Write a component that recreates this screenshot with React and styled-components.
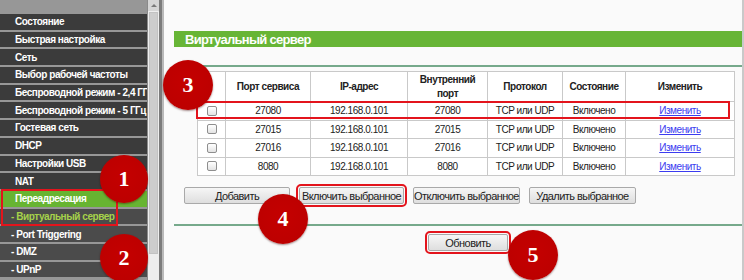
import React from "react";
import styled, { createGlobalStyle, css } from "styled-components";

const GlobalStyle = createGlobalStyle`
  html, body { margin: 0; padding: 0; background: #fafafa; }
  body { width: 744px; height: 280px; overflow: hidden; font-family: "Liberation Sans", Arial, sans-serif; }
`;

const Page = styled.div`
  position: relative;
  display: flex;
  width: 744px;
  height: 280px;
  overflow: hidden;
`;

const Sidebar = styled.nav`
  width: 147px;
  flex: none;
  background: #979797;
  padding-top: 14px;
  display: flex;
  flex-direction: column;
  gap: 2px;
`;

const MenuItem = styled.div`
  height: 15.7px;
  flex: none;
  display: flex;
  align-items: center;
  white-space: nowrap;
  overflow: hidden;
  padding-left: ${(p) => (p.$sub ? "11px" : "15px")};
  background: ${(p) => (p.$active ? "#67b431" : p.$sub ? "#4b4b4b" : "#3b3b3b")};
  color: ${(p) => (p.$current ? "#a6d24a" : "#ffffff")};
  font-size: 10px;
  font-weight: bold;
  letter-spacing: -0.45px;
`;

const Scrollbar = styled.div`
  width: 11px;
  flex: none;
  background: #eeeeee;
  border-left: 1px solid #8a8a8a;
  display: flex;
  flex-direction: column;
`;

const ScrollArrow = styled.div`
  height: 11px;
  display: flex;
  align-items: center;
  justify-content: center;
  background: #d6d6d6;
  &::before {
    content: "";
    border-left: 3px solid transparent;
    border-right: 3px solid transparent;
    border-bottom: 3px solid #7a7a7a;
  }
`;

const ScrollThumb = styled.div`
  height: 240px;
  margin: 1px 1px 0;
  background: #cdcdcd;
  border: 1px solid #c2c2c2;
`;

const FrameEdge = styled.div`
  width: 5px;
  flex: none;
  background: #b9b9b9;
  border-left: 3px solid #7c7c7c;
  box-sizing: border-box;
`;

const Content = styled.main`
  flex: 1;
  padding: 31px 0 0 10px;
  border-right: 2px solid #c9c9c9;
  display: flex;
  flex-direction: column;
`;

const TitleBar = styled.div`
  height: 16px;
  background: #67b536;
  color: #ffffff;
  font-weight: bold;
  font-size: 13px;
  letter-spacing: -0.7px;
  padding-left: 11px;
  display: flex;
  align-items: center;
`;

const Rule = styled.div`
  height: 2px;
  background: #76a98b;
  margin-top: ${(p) => p.$top}px;
`;

const Table = styled.table`
  margin: 4px 0 0 23px;
  width: 537px;
  border-collapse: collapse;
  table-layout: fixed;
  background: #ffffff;
  font-size: 10px;
  color: #222;
  letter-spacing: -0.45px;
`;

const Th = styled.th`
  height: 29px;
  border: 1px solid #c9c9c9;
  font-weight: bold;
  text-align: center;
  line-height: 14px;
  padding: 0 2px;
`;

const Td = styled.td`
  height: 17.5px;
  border: 1px solid #c9c9c9;
  text-align: center;
  padding: 0;
`;

const Check = styled.input.attrs({ type: "checkbox" })`
  appearance: none;
  width: 10px;
  height: 10px;
  margin: 2px 0 0;
  border: 1px solid #8e8e8e;
  border-radius: 2px;
  background: linear-gradient(#ffffff, #e3e3e3);
`;

const EditLink = styled.a`
  color: #3c3cf0;
  text-decoration: underline;
  cursor: pointer;
`;

const ButtonRow = styled.div`
  display: flex;
  gap: 9px;
  margin: 11px 0 0 10px;
  align-items: center;
`;

const Button = styled.button`
  height: 17px;
  width: ${(p) => p.$w}px;
  padding: 0;
  border: 1px solid #a9a9a9;
  border-radius: 2px;
  background: linear-gradient(#f6f6f6, #dedede);
  font-family: "Liberation Sans", Arial, sans-serif;
  font-size: 11px;
  letter-spacing: -0.55px;
  white-space: nowrap;
  color: #222;
  ${(p) =>
    p.$mark &&
    css`
      outline: 2px solid #e3141c;
      outline-offset: 1px;
    `}
`;

const RefreshRow = styled.div`
  display: flex;
  margin: 8px 0 0 254px;
`;

const Mark = styled.div`
  position: absolute;
  left: ${(p) => p.$x}px;
  top: ${(p) => p.$y}px;
  width: ${(p) => p.$w}px;
  height: ${(p) => p.$h}px;
  border: 2px solid #e3141c;
  box-sizing: border-box;
  pointer-events: none;
`;

const Badge = styled.div`
  position: absolute;
  left: ${(p) => p.$x}px;
  top: ${(p) => p.$y}px;
  width: ${(p) => p.$d}px;
  height: ${(p) => p.$d}px;
  border-radius: 50%;
  background: radial-gradient(circle at 50% 45%, #c40000 0%, #bd0000 70%, #a00000 100%);
  box-shadow: 0 1px 2px rgba(60, 0, 0, 0.45);
  color: #ffffff;
  font-family: "Liberation Serif", "Times New Roman", serif;
  font-weight: bold;
  font-size: 22px;
  display: flex;
  align-items: center;
  justify-content: center;
`;

const menu = [
  { t: "Состояние" },
  { t: "Быстрая настройка" },
  { t: "Сеть" },
  { t: "Выбор рабочей частоты" },
  { t: "Беспроводной режим - 2,4 ГГц" },
  { t: "Беспроводной режим - 5 ГГц" },
  { t: "Гостевая сеть" },
  { t: "DHCP" },
  { t: "Настройки USB" },
  { t: "NAT" },
  { t: "Переадресация", active: true },
  { t: "- Виртуальный сервер", sub: true, current: true },
  { t: "- Port Triggering", sub: true },
  { t: "- DMZ", sub: true },
  { t: "- UPnP", sub: true },
];

const rows = [
  ["27080", "27080"],
  ["27015", "27015"],
  ["27016", "27016"],
  ["8080", "8080"],
];

const cols = [28, 85, 97, 80, 75, 63, 109];

export default function App() {
  return (
    <>
      <GlobalStyle />
      <Page>
        <Sidebar>
          {menu.map((m) => (
            <MenuItem key={m.t} $sub={m.sub} $active={m.active} $current={m.current}>
              {m.t}
            </MenuItem>
          ))}
        </Sidebar>
        <Scrollbar>
          <ScrollArrow />
          <ScrollThumb />
        </Scrollbar>
        <FrameEdge />
        <Content>
          <TitleBar>Виртуальный сервер</TitleBar>
          <Rule $top={18} />
          <Table>
            <colgroup>
              {cols.map((w, i) => (
                <col key={i} style={{ width: w }} />
              ))}
            </colgroup>
            <thead>
              <tr>
                <Th></Th>
                <Th>Порт сервиса</Th>
                <Th>IP-адрес</Th>
                <Th>
                  Внутренний
                  <br />
                  порт
                </Th>
                <Th>Протокол</Th>
                <Th>Состояние</Th>
                <Th>Изменить</Th>
              </tr>
            </thead>
            <tbody>
              {rows.map(([a, b]) => (
                <tr key={a}>
                  <Td>
                    <Check />
                  </Td>
                  <Td>{a}</Td>
                  <Td>192.168.0.101</Td>
                  <Td>{b}</Td>
                  <Td>TCP или UDP</Td>
                  <Td>Включено</Td>
                  <Td>
                    <EditLink>Изменить</EditLink>
                  </Td>
                </tr>
              ))}
            </tbody>
          </Table>
          <ButtonRow>
            <Button $w={106}>Добавить</Button>
            <Button $w={105} $mark>
              Включить выбранное
            </Button>
            <Button $w={107}>Отключить выбранное</Button>
            <Button $w={107}>Удалить выбранное</Button>
          </ButtonRow>
          <Rule $top={20} />
          <RefreshRow>
            <Button $w={80} $mark>
              Обновить
            </Button>
          </RefreshRow>
        </Content>
        <Mark $x={1} $y={189} $w={117} $h={37} />
        <Mark $x={196} $y={101} $w={534} $h={18} />
        <Badge $x={100} $y={155} $d={48}>1</Badge>
        <Badge $x={100} $y={234} $d={48}>2</Badge>
        <Badge $x={163} $y={60} $d={50}>3</Badge>
        <Badge $x={258} $y={194} $d={50}>4</Badge>
        <Badge $x={508} $y={230} $d={50}>5</Badge>
      </Page>
    </>
  );
}
